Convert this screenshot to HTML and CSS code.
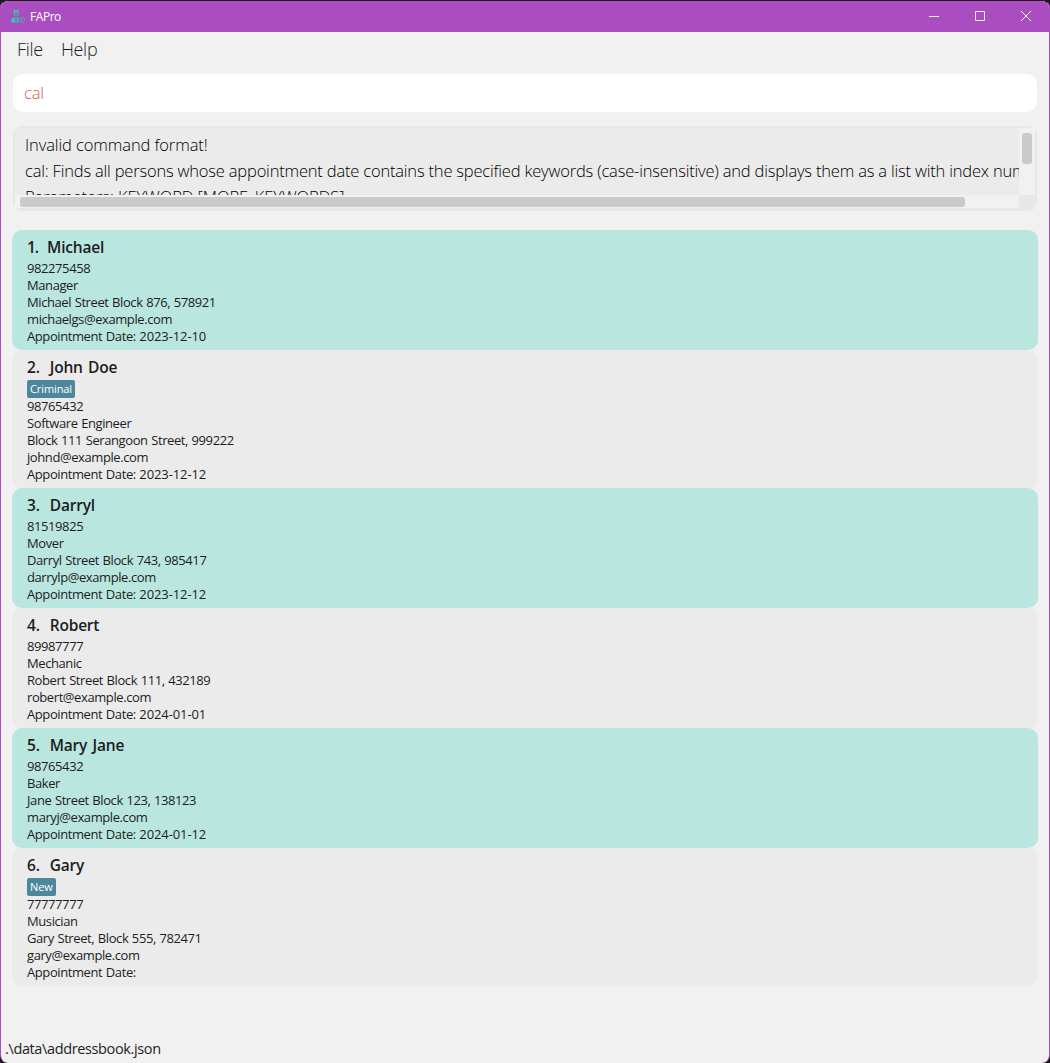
FILE: index.html
```html
<!DOCTYPE html>
<html lang="en">
<head>
<meta charset="utf-8">
<title>FAPro</title>
<link rel="stylesheet" href="styles.css">
</head>
<body>
<div class="window">
  <header class="titlebar">
    <svg class="logo" width="14" height="14" viewBox="0 0 14 14" fill="none" stroke="#45b7ad" stroke-width="1.2">
      <path d="M2.3 .5 5 1.2 7.7.5V3.400H2.300Z" fill="#3fbfae" stroke="none"/>
      <path d="M3.300 3v1.900Q3.500 7 5 7T6.900 4.900V3"/>
      <path d="M0 13.500V10.500Q.5 8.500 3 8.200L5 9.500 7 8.200 8.500 8.800 7.500 13.500Z" fill="#3fbfae" stroke="none"/>
      <path d="M4.300 9.500 5 13l.8-3.500" stroke="#7774b5" stroke-width=".8"/>
      <ellipse cx="8.800" cy="11" rx="1.600" ry="1.900" fill="#a94dc1" stroke-width=".9"/>
      <ellipse cx="11.900" cy="10.700" rx="1.500" ry="2.500" stroke-width=".9"/>
    </svg>
    <span class="title">FAPro</span>
    <div class="controls">
      <svg width="46" height="31" viewBox="0 0 46 31" stroke="#fff"><path d="M18 15.500h10"/></svg>
      <svg width="46" height="31" viewBox="0 0 46 31" fill="none" stroke="#fff"><rect x="18.500" y="10.500" width="9" height="9" rx=".5"/></svg>
      <svg width="46" height="31" viewBox="0 0 46 31" stroke="#fff"><path d="m18 10 10 10m0-10L18 20"/></svg>
    </div>
  </header>
  <nav class="menu"><span class="file">File</span><span class="help">Help</span></nav>
  <div class="command"><span>cal</span></div>
  <section class="result">
    <div class="output">
      <p>Invalid command format!</p>
      <p>cal: Finds all persons whose appointment date contains the specified keywords (case-insensitive) and displays them as a list with index numbers.</p>
      <p>Parameters: KEYWORD [MORE_KEYWORDS]...</p>
    </div>
    <div class="vbar"><i></i></div>
    <div class="hbar"><i></i></div>
    <div class="corner"></div>
  </section>
  <main class="list">
    <article class="card"><h2><span>1.</span>Michael</h2><p>982275458</p><p>Manager</p><p>Michael Street Block 876, 578921</p><p>michaelgs@example.com</p><p>Appointment Date: <time>2023-12-10</time></p></article>
    <article class="card"><h2><span>2.</span>John Doe</h2><b class="tag">Criminal</b><p>98765432</p><p>Software Engineer</p><p>Block 111 Serangoon Street, 999222</p><p>johnd@example.com</p><p>Appointment Date: <time>2023-12-12</time></p></article>
    <article class="card"><h2><span>3.</span>Darryl</h2><p>81519825</p><p>Mover</p><p>Darryl Street Block 743, 985417</p><p>darrylp@example.com</p><p>Appointment Date: <time>2023-12-12</time></p></article>
    <article class="card"><h2><span>4.</span>Robert</h2><p>89987777</p><p>Mechanic</p><p>Robert Street Block 111, 432189</p><p>robert@example.com</p><p>Appointment Date: <time>2024-01-01</time></p></article>
    <article class="card"><h2><span>5.</span>Mary Jane</h2><p>98765432</p><p>Baker</p><p>Jane Street Block 123, 138123</p><p>maryj@example.com</p><p>Appointment Date: <time>2024-01-12</time></p></article>
    <article class="card"><h2><span>6.</span>Gary</h2><b class="tag">New</b><p>77777777</p><p>Musician</p><p>Gary Street, Block 555, 782471</p><p>gary@example.com</p><p>Appointment Date:</p></article>
  </main>
  <footer class="status">.\data\addressbook.json</footer>
</div>
</body>
</html>
```
FILE: styles.css
```css
* { box-sizing: border-box; }
body { margin: 0; background: #1c1c1c; font-family: "Open Sans", "Noto Sans", sans-serif; color: #1d1d1d; }
h2, p { margin: 0; }
.window { height: 1063px; display: flex; flex-direction: column; border: 1px solid #a94dc1; border-top-color: #1c1c1c; border-bottom: 0; border-radius: 8px; background: #f1f1f1; overflow: hidden; }
.titlebar { height: 31px; flex: none; display: flex; align-items: center; background: #a94dc1; color: #fff; }
.logo { margin: 0 0 1px 10px; }
.title { flex: 1; margin: 0 0 1px 5px; font-size: 12px; letter-spacing: -.45px; }
.controls { display: flex; }
.menu { height: 42px; flex: none; display: flex; padding: 0 0 8px 16px; gap: 18px; align-items: center; font-size: 18px; font-weight: 300; letter-spacing: -.3px; }
.command { height: 38px; flex: none; margin: 0 12px; padding: 0 0 2px 11px; display: flex; align-items: center; border-radius: 10px; background: #fff; color: #d0604c; font-size: 16.5px; font-weight: 300; letter-spacing: -.2px; }
.result { height: 85px; flex: none; margin: 14px 12px 0; padding: 2px 2px 3px; display: grid; grid-template: 67px 13px / 1fr 16px; border-radius: 9px; background: #e7e7e7; }
.output { padding: 4px 0 0 10px; overflow: hidden; background: #ebebeb; color: #000; font-size: 16.5px; font-weight: 300; line-height: 26px; white-space: nowrap; letter-spacing: -.19px; }
.output p:nth-child(odd) { letter-spacing: -.1px; }
.vbar { padding: 5px 3px; background: #f1f1f1; }
.vbar i { display: block; width: 10px; height: 31px; border-radius: 3px; background: #cacaca; }
.hbar { padding: 2px 5px; background: #f1f1f1; }
.hbar i { display: block; width: 945px; height: 10px; border-radius: 3px; background: #cacaca; }
.list { flex: 1; margin: 19px 11px 0; }
.card { padding: 7px 15px 5px; border-radius: 10px; background: #ebebeb; font-size: 13px; line-height: 17px; letter-spacing: -.41px; word-spacing: .6px; }
.card:nth-child(odd) { background: #b9e6de; }
.card time { letter-spacing: -.1px; }
.card h2 { display: flex; gap: 10px; height: 23px; font-size: 15.5px; line-height: 21px; font-weight: 600; letter-spacing: -.2px; word-spacing: 1.5px; }
.card:first-child h2 { gap: 9px; }
.card:first-child h2 span { letter-spacing: -1px; }
.tag { display: block; width: fit-content; height: 18px; padding: 0 3px; border-radius: 2px; background: #4c879b; color: #fff; font-size: 11px; line-height: 18px; font-weight: 400; letter-spacing: -.1px; }
.status { height: 27px; padding-left: 4px; font-size: 14.5px; line-height: 26px; letter-spacing: -.37px; }
```
